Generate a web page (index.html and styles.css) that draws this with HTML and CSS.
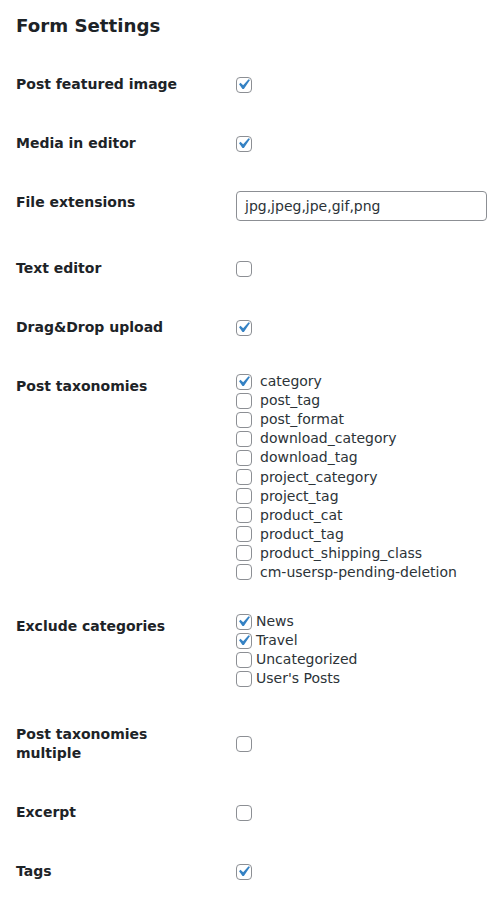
FILE: index.html
```html
<!DOCTYPE html>
<html>
<head>
<meta charset="utf-8">
<link rel="stylesheet" href="styles.css">
</head>
<body>
<div class="wrap">
  <h2 class="title">Form Settings</h2>
  <div class="form-table">
    <div class="row">
      <div class="th">Post featured image</div>
      <div class="td"><span class="cb on"><svg viewBox="0 0 20 20"><path d="M14.83 4.89l1.34.94-5.81 8.38H9.02L5.78 9.67l1.34-1.25 2.57 2.4z"/></svg></span></div>
    </div>
    <div class="row">
      <div class="th">Media in editor</div>
      <div class="td"><span class="cb on"><svg viewBox="0 0 20 20"><path d="M14.83 4.89l1.34.94-5.81 8.38H9.02L5.78 9.67l1.34-1.25 2.57 2.4z"/></svg></span></div>
    </div>
    <div class="row">
      <div class="th">File extensions</div>
      <div class="td"><div class="input-wrap"><div class="text-input">jpg,jpeg,jpe,gif,png</div></div></div>
    </div>
    <div class="row">
      <div class="th">Text editor</div>
      <div class="td"><span class="cb"></span></div>
    </div>
    <div class="row">
      <div class="th">Drag&amp;Drop upload</div>
      <div class="td"><span class="cb on"><svg viewBox="0 0 20 20"><path d="M14.83 4.89l1.34.94-5.81 8.38H9.02L5.78 9.67l1.34-1.25 2.57 2.4z"/></svg></span></div>
    </div>
    <div class="row">
      <div class="th">Post taxonomies</div>
      <div class="td">
        <div class="list wide">
          <div class="item"><span class="cb on"><svg viewBox="0 0 20 20"><path d="M14.83 4.89l1.34.94-5.81 8.38H9.02L5.78 9.67l1.34-1.25 2.57 2.4z"/></svg></span><span>category</span></div>
          <div class="item"><span class="cb"></span><span>post_tag</span></div>
          <div class="item"><span class="cb"></span><span>post_format</span></div>
          <div class="item"><span class="cb"></span><span>download_category</span></div>
          <div class="item"><span class="cb"></span><span>download_tag</span></div>
          <div class="item"><span class="cb"></span><span>project_category</span></div>
          <div class="item"><span class="cb"></span><span>project_tag</span></div>
          <div class="item"><span class="cb"></span><span>product_cat</span></div>
          <div class="item"><span class="cb"></span><span>product_tag</span></div>
          <div class="item"><span class="cb"></span><span>product_shipping_class</span></div>
          <div class="item"><span class="cb"></span><span>cm-usersp-pending-deletion</span></div>
        </div>
      </div>
    </div>
    <div class="row">
      <div class="th">Exclude categories</div>
      <div class="td">
        <div class="list tight">
          <div class="item"><span class="cb on"><svg viewBox="0 0 20 20"><path d="M14.83 4.89l1.34.94-5.81 8.38H9.02L5.78 9.67l1.34-1.25 2.57 2.4z"/></svg></span><span>News</span></div>
          <div class="item"><span class="cb on"><svg viewBox="0 0 20 20"><path d="M14.83 4.89l1.34.94-5.81 8.38H9.02L5.78 9.67l1.34-1.25 2.57 2.4z"/></svg></span><span>Travel</span></div>
          <div class="item"><span class="cb"></span><span>Uncategorized</span></div>
          <div class="item"><span class="cb"></span><span>User's Posts</span></div>
        </div>
      </div>
    </div>
    <div class="row">
      <div class="th">Post taxonomies multiple</div>
      <div class="td"><span class="cb"></span></div>
    </div>
    <div class="row">
      <div class="th">Excerpt</div>
      <div class="td"><span class="cb"></span></div>
    </div>
    <div class="row">
      <div class="th">Tags</div>
      <div class="td"><span class="cb on"><svg viewBox="0 0 20 20"><path d="M14.83 4.89l1.34.94-5.81 8.38H9.02L5.78 9.67l1.34-1.25 2.57 2.4z"/></svg></span></div>
    </div>
  </div>
</div>
</body>
</html>
```

FILE: styles.css
```css
html, body {
  margin: 0;
  padding: 0;
  background: #ffffff;
}
body {
  font-family: "DejaVu Sans", Verdana, sans-serif;
  font-size: 14px;
  color: #1d2327;
}
.wrap {
  padding: 0 0 0 16px;
}
.title {
  font-size: 18.2px;
  font-weight: bold;
  line-height: 24px;
  margin: 14px 0 17px 0;
  color: #1d2327;
}
.form-table {
  display: flex;
  flex-direction: column;
}
.row {
  display: flex;
  align-items: stretch;
}
.th {
  width: 200px;
  flex: none;
  padding: 20px 10px 20px 0;
  line-height: 19px;
  font-weight: bold;
  color: #1d2327;
}
.td {
  flex: 1;
  padding: 15px 10px;
  display: flex;
  align-items: center;
  line-height: 19px;
}
.cb {
  width: 16px;
  height: 16px;
  box-sizing: border-box;
  border: 1px solid #8c8f94;
  border-radius: 4px;
  background: #fff;
  flex: none;
  position: relative;
  display: inline-block;
}
.cb svg {
  position: absolute;
  width: 21px;
  height: 21px;
  left: -4px;
  top: -4px;
  fill: #3582c4;
}
.input-wrap {
  height: 36px;
  display: flex;
  align-items: center;
}
.text-input {
  width: 251px;
  height: 30px;
  box-sizing: border-box;
  border: 1px solid #8c8f94;
  border-radius: 4px;
  padding: 0 8px;
  line-height: 28px;
  color: #2c3338;
  background: #fff;
}
.list {
  display: flex;
  flex-direction: column;
}
.item {
  height: 19.1px;
  display: flex;
  align-items: center;
  color: #2c3338;
}
.wide .item {
  gap: 8px;
}
.tight {
  padding-bottom: 2px;
}
.tight .item {
  gap: 4px;
}
```
